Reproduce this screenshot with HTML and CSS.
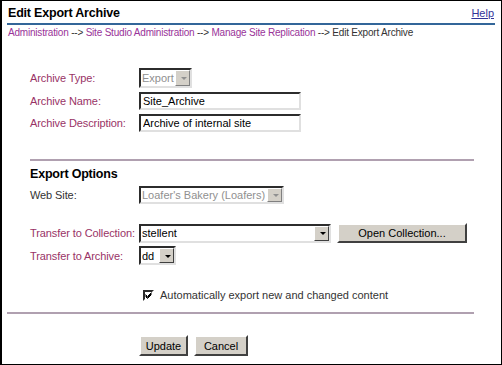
FILE: index.html
```html
<!DOCTYPE html>
<html lang="en">
  <head>
    <meta charset="UTF-8" />
    <title>Edit Export Archive</title>
    <link rel="stylesheet" href="styles.css">
  </head>
  <body>
    <div class="page">
      <div class="head">
        <h1>Edit Export Archive</h1>
        <a href="#" class="help">Help</a>
      </div>
      <div class="crumbs">
        <a href="#">Administration</a> --&gt;
        <a href="#">Site Studio Administration</a> --&gt;
        <a href="#">Manage Site Replication</a> --&gt;
        <span>Edit Export Archive</span>
      </div>

      <form class="form">
        <div class="row first">
          <label>Archive Type:</label>
          <span class="combo off w-type"><select disabled><option>Export</option></select></span>
        </div>
        <div class="row">
          <label>Archive Name:</label>
          <input type="text" class="field" value="Site_Archive" />
        </div>
        <div class="row">
          <label>Archive Description:</label>
          <input type="text" class="field" value="Archive of internal site" />
        </div>

        <hr class="rule" />

        <h2>Export Options</h2>
        <div class="row site">
          <label class="plain">Web Site:</label>
          <span class="combo off w-site"><select disabled><option>Loafer's Bakery (Loafers)</option></select></span>
        </div>

        <div class="row coll">
          <label>Transfer to Collection:</label>
          <span class="combo w-coll"><select><option>stellent</option></select></span>
          <button type="button" class="btn open">Open Collection...</button>
        </div>
        <div class="row arch">
          <label>Transfer to Archive:</label>
          <span class="combo w-arch"><select><option>dd</option></select></span>
        </div>

        <div class="check">
          <span class="box">
            <svg width="7" height="7" viewBox="0 0 7 7"><path d="M0.5 2.5 L2.5 4.5 L6.5 0.5 M0.5 3.5 L2.5 5.5 L6.5 1.5 M0.5 4.5 L2.5 6.5 L6.5 2.5" stroke="#000" stroke-width="1" fill="none"/></svg>
          </span>
          <span>Automatically export new and changed content</span>
        </div>
      </form>

      <hr class="rule bottom" />

      <div class="actions">
        <button type="button" class="btn upd">Update</button>
        <button type="button" class="btn cancel">Cancel</button>
      </div>
    </div>
  </body>
</html>
```

FILE: styles.css
```css
* {
  box-sizing: border-box;
}

body {
  margin: 0;
  background: #fff;
}

.page {
  width: 502px;
  height: 365px;
  border: 1px solid #000;
  border-left-width: 2px;
  padding: 0 6px 0 5px;
  font-family: "Liberation Sans", Arial, sans-serif;
  font-size: 11px;
  color: #333;
}

.head {
  display: flex;
  justify-content: space-between;
  align-items: flex-end;
  border-bottom: 2px solid #336699;
  height: 24px;
  padding: 0 1px 3px 1px;
}

h1 {
  margin: 0;
  font-family: "Liberation Sans", Arial, sans-serif;
  font-size: 12.5px;
  font-weight: bold;
  color: #000;
  letter-spacing: -0.2px;
}

.help {
  font-family: "Liberation Sans", Arial, sans-serif;
  font-size: 11px;
  color: #333399;
  text-decoration: underline;
  margin-bottom: 1px;
}

.crumbs {
  font-family: "Liberation Sans", Arial, sans-serif;
  font-size: 10px;
  color: #333;
  padding: 2px 0 0 1px;
  letter-spacing: -0.2px;
}

.crumbs a {
  color: #993399;
  text-decoration: none;
}

.form {
  padding-left: 23px;
}

.row {
  display: flex;
  align-items: center;
  margin-top: 4px;
}

.row.first {
  margin-top: 30px;
}

.row label {
  width: 109px;
  color: #993366;
  flex-shrink: 0;
  letter-spacing: -0.1px;
}

.row label.plain {
  color: #333;
}

.field {
  width: 162px;
  height: 18px;
  border: 2px inset #eee;
  border-color: #808080 #e0e0e0 #e0e0e0 #808080;
  padding: 0 2px;
  font-family: "Liberation Sans", Arial, sans-serif;
  font-size: 11px;
  color: #000;
}

.combo {
  position: relative;
  display: inline-block;
  height: 19px;
}

.combo select {
  appearance: none;
  -webkit-appearance: none;
  width: 100%;
  height: 100%;
  border: 2px inset #eee;
  border-color: #808080 #e0e0e0 #e0e0e0 #808080;
  background: #fff;
  padding: 0 0 0 1px;
  font-family: "Liberation Sans", Arial, sans-serif;
  font-size: 11px;
  color: #000;
  border-radius: 0;
}

.combo::after {
  content: "";
  position: absolute;
  right: 2px;
  top: 2px;
  bottom: 2px;
  width: 13px;
  background: #d4d0c8;
  border: 1px solid;
  border-color: #fff #404040 #404040 #fff;
}

.combo::before {
  content: "";
  position: absolute;
  z-index: 1;
  right: 5px;
  top: 50%;
  margin-top: -1px;
  border: 3px solid transparent;
  border-top: 3px solid #000;
  border-bottom: 0;
}

.combo.off select,
.combo.off select:disabled {
  color: #909090;
  background: #fff;
  opacity: 1;
}

.combo.off::after {
  border-color: #fff #808080 #808080 #fff;
}

.combo.off::before {
  border-top-color: #909090;
}

.w-type {
  width: 53px;
  height: 20px;
}

.w-site {
  width: 145px;
  height: 18px;
}

.w-coll {
  width: 192px;
}

.w-arch {
  width: 37px;
}

.rule {
  border: 0;
  border-top: 2px solid #b0a0b0;
  margin: 27px 1px 0 0;
  width: 444px;
}

h2 {
  margin: 6px 0 0 0;
  font-family: "Liberation Sans", Arial, sans-serif;
  font-size: 12.5px;
  font-weight: bold;
  color: #000;
  letter-spacing: -0.2px;
}

.row.site {
  margin-top: 5px;
}

.row.coll {
  margin-top: 19px;
}

.row.arch {
  margin-top: 3px;
}

.btn {
  font-family: "Liberation Sans", Arial, sans-serif;
  font-size: 11px;
  color: #000;
  background: #d4d0c8;
  border: 2px solid;
  border-color: #fff #404040 #404040 #fff;
  padding: 0;
  height: 20px;
}

.open {
  width: 130px;
  margin-left: 6px;
}

.check {
  display: flex;
  align-items: center;
  gap: 6px;
  margin: 24px 0 0 113px;
}

.box {
  width: 11px;
  height: 11px;
  border: 2px inset #eee;
  border-color: #808080 #fff #fff #808080;
  display: flex;
  align-items: center;
  justify-content: center;
}

.rule.bottom {
  margin: 11px 0 0 0;
  width: 467px;
}

.actions {
  display: flex;
  gap: 6px;
  margin: 21px 0 0 132px;
}

.upd {
  width: 49px;
  height: 21px;
}

.cancel {
  width: 54px;
  height: 21px;
}
```
